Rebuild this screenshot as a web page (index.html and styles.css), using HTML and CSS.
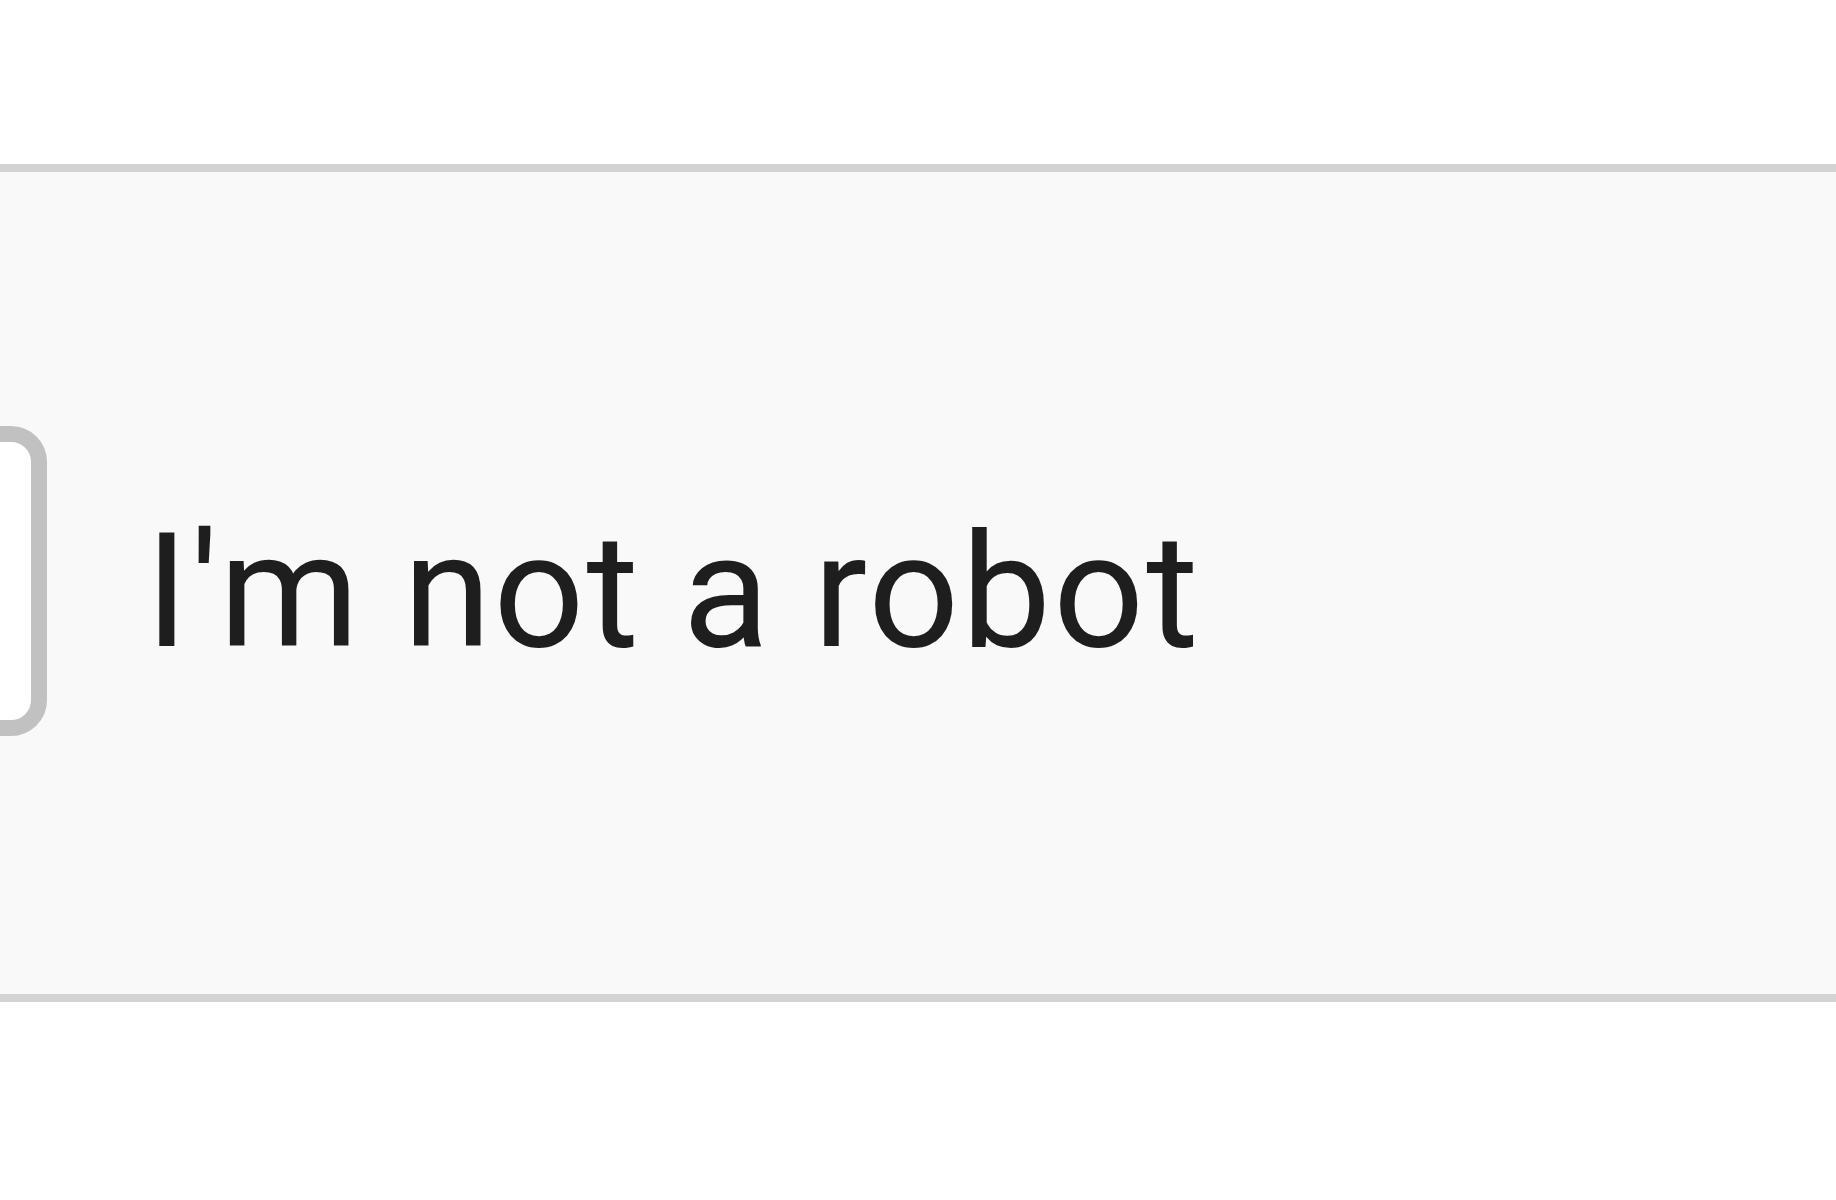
FILE: index.html
```html
<!DOCTYPE html>
<html lang="en">
<head>
<meta charset="utf-8">
<title>reCAPTCHA</title>
<link rel="stylesheet" href="styles.css">
</head>
<body>
  <div class="panel">
    <div class="row">
      <div class="checkbox"></div>
      <span class="label">I'm not a robot</span>
    </div>
  </div>
</body>
</html>
```

FILE: styles.css
```css
html, body {
  margin: 0;
  padding: 0;
  background: #ffffff;
  overflow: hidden;
}

body {
  width: 1836px;
  height: 1200px;
  font-family: Roboto, "Liberation Sans", Arial, sans-serif;
}

.panel {
  margin-top: 164px;
  height: 822px;
  background: #f9f9f9;
  border-top: 8px solid #d3d3d3;
  border-bottom: 8px solid #d3d3d3;
  display: flex;
  align-items: center;
}

.row {
  display: flex;
  align-items: center;
  gap: 98px;
}

.checkbox {
  margin-left: -263px;
  margin-bottom: 4px;
  width: 310px;
  height: 310px;
  box-sizing: border-box;
  border: 16px solid #c1c1c1;
  border-radius: 36px;
  background: #ffffff;
  flex: none;
}

.label {
  margin-top: 18px;
  font-size: 160px;
  line-height: 1;
  letter-spacing: 2px;
  color: #1e1e1e;
  white-space: nowrap;
}
```
